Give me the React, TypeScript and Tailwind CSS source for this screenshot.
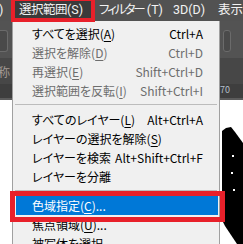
import React from "react";

type Item = {
  label: string;
  key?: string;
  tail?: string;
  shortcut?: string;
  disabled?: boolean;
  active?: boolean;
};

const groups: Item[][] = [
  [
    { label: "すべてを選択(", key: "A", tail: ")", shortcut: "Ctrl+A" },
    { label: "選択を解除(", key: "D", tail: ")", shortcut: "Ctrl+D", disabled: true },
    { label: "再選択(", key: "E", tail: ")", shortcut: "Shift+Ctrl+D", disabled: true },
    { label: "選択範囲を反転(", key: "I", tail: ")", shortcut: "Shift+Ctrl+I", disabled: true },
  ],
  [
    { label: "すべてのレイヤー(", key: "L", tail: ")", shortcut: "Alt+Ctrl+A" },
    { label: "レイヤーの選択を解除(", key: "S", tail: ")" },
    { label: "レイヤーを検索", shortcut: "Alt+Shift+Ctrl+F" },
    { label: "レイヤーを分離" },
  ],
  [
    { label: "色域指定(", key: "C", tail: ")...", active: true },
    { label: "焦点領域(", key: "U", tail: ")..." },
    { label: "被写体を選択" },
  ],
];

const Row = ({ item }: { item: Item }) => {
  const color = item.active
    ? "text-white"
    : item.disabled
    ? "text-[#6d6d6d]"
    : "text-black";
  return (
    <div
      className={`flex h-[19px] items-center pr-[16px] ${color} ${
        item.active ? "ml-[3px] mr-[1px] bg-[#0078d7] pl-[16px]" : "pl-[19px]"
      }`}
    >
      <span className="flex-1 whitespace-nowrap">
        {item.label}
        {item.key && <span className="underline underline-offset-2">{item.key}</span>}
        {item.tail}
      </span>
      {item.shortcut && <span className="whitespace-nowrap">{item.shortcut}</span>}
    </div>
  );
};

// dark panel strip beside the menu (toolbar / options bar / ruler)
const Strip = ({ side }: { side: "left" | "right" }) => (
  <div className="flex h-full flex-col">
    <div className="h-[9px] bg-[#535353]" />
    <div className="flex h-[22px] bg-[#535353]">
      {side === "left" ? (
        <div className="h-full w-[8px] rounded-r-[3px] border border-l-0 border-[#6b6b6b] bg-[#4a4a4a]" />
      ) : (
        <div className="ml-[3px] h-full w-[8px] rounded-[3px] border border-[#6b6b6b] bg-[#4a4a4a]" />
      )}
    </div>
    <div className="h-[6px] bg-[#535353]" />
    <div className="h-[26px] bg-[#474747] pt-[8px]">
      {side === "left" && (
        <div className="ml-[-2px] whitespace-nowrap text-[12px] leading-[12px] text-[#a29a94]">称</div>
      )}
    </div>
    <div className="h-[14px] bg-[#3e3e3e]">
      {side === "right" && (
        <div className="whitespace-nowrap pt-[1px] text-[9px] leading-[10px] text-[#b4bfcc]">70</div>
      )}
    </div>
    <div className="h-[2px] bg-[#5c5c5c]" />
    <div className="relative flex-1 bg-white">
      {side === "right" && (
        <svg className="absolute left-0 top-0" width="23" height="144" viewBox="0 0 23 144">
          <polygon
            points="2,31 6,28 11,27 15,32 23,43 23,144 17,144 13,138 9,132 5,126 2,120"
            fill="#000"
          />
          <rect x="12" y="55" width="2" height="2" fill="#fff" />
          <rect x="11" y="72" width="2" height="2" fill="#fff" />
          <rect x="13" y="89" width="2" height="2" fill="#fff" />
        </svg>
      )}
    </div>
  </div>
);

export default function App() {
  return (
    <div className="relative h-[244px] w-[243px] overflow-hidden bg-white font-['Noto_Sans_CJK_JP',sans-serif] [font-feature-settings:'palt']">
      {/* menu bar */}
      <div className="flex h-[21px] items-center whitespace-nowrap bg-[#525252] font-['Roboto','Noto_Sans_CJK_JP',sans-serif] text-[12.5px] leading-none text-[#f2f2f2]">
        <span className="ml-[-1px] w-[16px] shrink-0">)</span>
        <span className="flex h-full w-[76px] shrink-0 items-center bg-[#3a3a3a] pl-[4px]">
          <span className="tracking-[-0.5px]">選択範囲</span>(S)
        </span>
        <span className="ml-[8px] w-[74px] shrink-0">
          <span className="tracking-[-2px]">フィルター</span> (T)
        </span>
        <span className="w-[45px] shrink-0">3D(D)</span>
        <span className="shrink-0">表示</span>
      </div>

      <div className="flex h-[223px]">
        <div className="w-[12px] shrink-0">
          <Strip side="left" />
        </div>
        <div className="w-[208px] shrink-0 border-x border-[#a0a0a0] bg-[#f0f0f0] pt-[3px] text-[12px] leading-none">
          {groups.map((g, i) => (
            <div key={i}>
              {i > 0 && (
                <div className="h-[10px] pt-[4px]">
                  <div className="mx-[2px] h-px bg-[#bcbcbc]" />
                </div>
              )}
              {g.map((it) => (
                <Row key={it.label} item={it} />
              ))}
            </div>
          ))}
        </div>
        <div className="flex-1">
          <Strip side="right" />
        </div>
      </div>

      {/* red annotation boxes */}
      <div className="pointer-events-none absolute left-[11px] top-[-3px] h-[25px] w-[84px] border-4 border-[#e8202a]" />
      <div className="pointer-events-none absolute left-[10px] top-[191px] h-[31px] w-[215px] border-[5px] border-[#e8202a]" />
    </div>
  );
}
